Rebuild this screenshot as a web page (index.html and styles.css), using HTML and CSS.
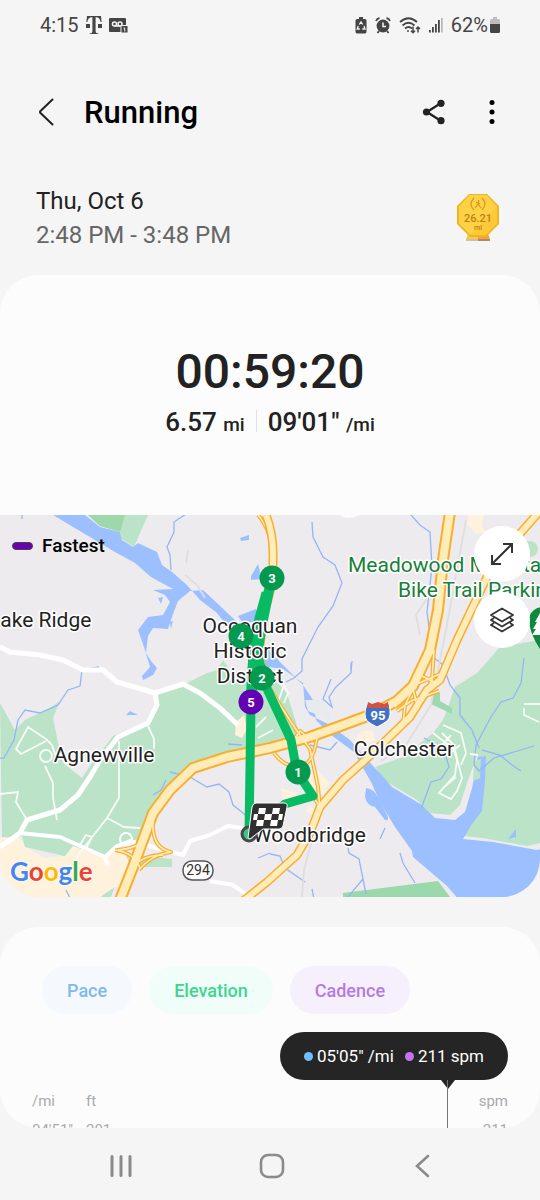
FILE: index.html
```html
<!DOCTYPE html>
<html lang="en">
<head>
    <meta charset="UTF-8">
    <meta name="viewport" content="width=device-width, initial-scale=1.0">
    <title>Running</title>
    <link rel="stylesheet" href="styles.css">
</head>
<body>
    <div class="status-bar">
        <div class="status-group">
            <span>4:15</span>
            <svg width="16" height="19" viewBox="0 0 16 19" fill="#454545">
                <path d="M1 0h14l.6 6h-1c-.5-3-1.600-4.600-5-4.700V15c0 1.700.6 2.200 2.600 2.300V18H3.800v-.7c2-.1 2.600-.6 2.600-2.300V1.300C3 1.400 1.900 3 1.400 6h-1zM0 8h4v4H0zM12 8h4v4h-4z"/>
            </svg>
            <svg width="19" height="15" viewBox="0 0 19 15">
                <rect width="17" height="14" rx="1" fill="#454545"/>
                <g fill="none" stroke="#f5f5f5" stroke-width="1.500"><circle cx="5.500" cy="6" r="2"/><circle cx="11" cy="6" r="2"/><path d="M5.500 8H11"/></g>
                <path d="M12 7.500h7V15h-7z" fill="#454545" stroke="#f5f5f5"/>
                <path d="M14.500 10h1.200v3.500" stroke="#f5f5f5" fill="none"/>
            </svg>
        </div>
        <div class="status-group status-right">
            <svg width="12" height="17" viewBox="0 0 12 17">
                <path d="M4 0h4v2h2q1.500 0 1.500 1.500v11q0 2-1.500 2H2q-1.500 0-1.500-2v-11Q.5 2 2 2h2z" fill="#454545"/>
                <path d="M4.300 7.500 6 5l1.700 2.500M9 9l1 3H7.300M4.800 12H2.200L3.300 9" fill="none" stroke="#f5f5f5" stroke-width="1.300"/>
            </svg>
            <svg width="16" height="17" viewBox="0 0 16 17" fill="none" stroke="#454545" stroke-width="1.800">
                <circle cx="8" cy="9" r="5.500" fill="#454545"/>
                <path d="M1 4q1-2.500 3.500-3M15 4q-1-2.500-3.500-3M4 14l-1.500 2M12 14l1.500 2"/>
                <path d="M8 5.500V9.500h3" stroke="#f5f5f5" stroke-width="1.500"/>
            </svg>
            <svg width="22" height="17" viewBox="0 0 22 17" fill="none" stroke="#454545" stroke-width="1.700">
                <path d="M1 5q8.500-7.500 17 0M3.500 8.500q6-5.500 12 0M6 11.500q3.500-3 7 0"/>
                <circle cx="9" cy="14" r=".7" fill="#454545" stroke-width=".6"/>
                <path d="M14 9.500V16M12 13.800l2 2 2-2M19 15.500V10M17 12l2-2 2 2" stroke-width="1.500"/>
            </svg>
            <svg width="14" height="16" viewBox="0 0 14 16" fill="#454545">
                <path d="M0 13h1.800v2.500H0zM3 10h1.800v5.500H3zM6 7h1.800v8.500H6zM9 3h1.800v12.500H9z"/>
                <path d="M12 1h1.800v14.500H12z" fill="#bbb"/>
            </svg>
            <span class="battery">62%
                <svg width="10" height="16" viewBox="0 0 10 16">
                    <path d="M3 0h4v2h1.500Q10 2 10 3.500V8H0V3.500Q0 2 1.500 2H3z" fill="#bdbdbd"/>
                    <path d="M0 7h10v7.500q0 1.500-1.500 1.500h-7Q0 16 0 14.500z" fill="#454545"/>
                </svg>
            </span>
        </div>
    </div>

    <header class="app-bar">
        <button class="icon-button" aria-label="Back">
            <svg width="16" height="28" viewBox="0 0 16 28" fill="none" stroke="#222" stroke-width="2" stroke-linecap="round" stroke-linejoin="round"><path d="M14.500 1.500 2.500 13q-1 1 0 2l12 11.500"/></svg>
        </button>
        <h1>Running</h1>
        <button class="icon-button" aria-label="Share">
            <svg width="24" height="26" viewBox="0 0 24 26" fill="#222"><path d="M19 4 5 13l14 9" fill="none" stroke="#222" stroke-width="2.300"/><circle cx="19" cy="4.300" r="3.600"/><circle cx="4.500" cy="13" r="3.600"/><circle cx="19" cy="21.700" r="3.600"/></svg>
        </button>
        <button class="icon-button more" aria-label="More options">
            <svg width="6" height="26" viewBox="0 0 6 26"><circle cx="3" cy="3.500" r="2.500"/><circle cx="3" cy="13" r="2.500"/><circle cx="3" cy="22.500" r="2.500"/></svg>
        </button>
    </header>

    <section class="workout-date">
        <div>
            <div>Thu, Oct 6</div>
            <div class="hours">2:48 PM - 3:48 PM</div>
        </div>
        <svg class="badge" width="42" height="48" viewBox="0 0 42 48">
            <path d="M11 40h20v5H9z" fill="#ffc83d"/>
            <path d="M21 40h10l2 5H21z" fill="#ff9c2a"/>
            <path d="M9 45h12v2H9z" fill="#c3c3b0"/>
            <path d="M21 45h12v2H21z" fill="#a18d78"/>
            <path d="M12 0h18l12 12v18L29 43H13L0 30V12z" fill="#f0b429"/>
            <path d="M12.500 1h17L40 12.500v17L28.500 41h-15L2 29.500v-17z" fill="#ffd245"/>
            <path d="M40 12.500v17L28.500 41h-15z" fill="#fdc938"/>
            <path d="M17 4q-6 6 0 12M25 4q6 6 0 12M22 6l-1 4-3 4M21 10l3 4M19 8l4 2" fill="none" stroke="#d79a25" stroke-width="1.200"/>
            <text x="21" y="28" class="badge-value">26.21</text>
            <text x="21" y="36" class="badge-unit">mi</text>
        </svg>
    </section>

    <main>
        <section class="card summary">
            <div class="duration">00:59:20</div>
            <div class="stats">
                <div>6.57 <small>mi</small></div>
                <div class="pace">09'01" <small>/mi</small></div>
            </div>
            <div class="map">
                <svg class="map-canvas" viewBox="0 0 540 382" role="img" aria-label="Route map">
                    <rect width="540" height="382" fill="#eeebef"/>
                    <!-- parks -->
                    <g fill="#bbe3c7">
                        <path d="M0 188l15 27 10-10 25-12 10-7-7 17 5 25 5 20 19 15 8-12 23-30 34-14 8-16V178l30-9 22-11 10-3 6-10 7 10 20 5 25 5 12 13 5 17 8 25-30 15-75 17-30 33-20 40-25 5-20 20-25-5-15-5-35-8-3-11-20 4z"/>
                        <path d="M88 0h60l-14 32-12-8-2-8-20-5z"/>
                        <path d="M447 195l8-23 22-14 23-26 40-7v203l-13 3-44-8-30-3-3-5 12-10 10-13 3-30 3-24-11 30-7 22-10 10-20-2-13-13-30-18-12-15 28-10 30-24 10-13z"/>
                        <path d="M431 185l3-9 6 2v8l12 7v6l-21-10z" fill="#9ed8af"/>
                        <path d="M122 341h22l28 3v8h-45zM97 382l18-11-4 11z"/>
                        <path d="M343 378l95-12 12 16H343z" fill="#9bd8ab"/>
                        <circle cx="530" cy="34" r="8"/>
                    </g>
                    <path d="M88 0h37l-5 17-20-6z" fill="#9dd7aa"/>
                    <!-- built-up areas -->
                    <g fill="#fff2dd">
                        <path d="M0 322l20 1 5 9 20 11 20-2 8-10 30 11 20-9 6 15-9 25-5-1-15 10H0z"/>
                        <path d="M236 207l8-7 3 14-5 9-7-3zM360 217l12-2 3 10-15 8-5-9zM310 260l8-4 12 12-8 12-13-12zM281 273l16 5-5 14-9-6zM308 290l12 8-5 5-8-7zM468 0h16l-2 10 3 7-8 2-10-10z"/>
                    </g>
                    <!-- water -->
                    <g fill="#9cc0ff">
                        <path d="M53 0h32l15 12 20 5 2 8 11 7 5-4 19 9 5 13 10 7 15 13 13 15 17 13 13 17 25 35 28 4 20 14 2 24 5 8 20 10 20 15 25 28 5 5 12 14 30 18 13 13 20 2 10-8 7-24 6-31 8-1-1 25-3 30-10 13-9 15 30 3 44 8 13-3v54h-90l-13-15-34-29-1-6-17-24-14-23-10-22-17-30-23-17-15-15-3-20-10-15-22-22-23-25-22-17-18-17-15-14-13 1-12 10-5 13-5 15-15-1-5 8-2 17 5 8 6 7-4 7-10 5-1-4 8-9-5-17-7-20 10-13 15-2 7-13-5-7-12-5 20-1-22-12-16-14-20-11z"/>
                        <path d="M366 273q8 1 12 9l9 18q3 6-2 5l-10-13q-8-1-10-10zM240 23l9-3v5l-8 1zM251 61l7-12 4 15-11 1zM238 101l18-7 4 10-16 6zM158 83l5-1-2 7zM170 107l3-1-2 8zM126 200l4-4 8 4zM508 324l8-10v8z"/>
                    </g>
                    <path d="M474 246l7-2-1 19-7 3z" fill="#bbe3c7"/>
                    <path d="M305 185h20l7 21-24-10z" fill="#e8ebee"/>
                    <g fill="none" stroke="#93b6f4" stroke-width="1.300">
                        <path d="M171 55l-1-15-3-8 7-15v-10l12-8M99 152l-17 3-2 16-12 4-10 15-18 8-15-3-7 10-4 20-10 18-14 1M312 7l1 15 10 20 12 8 7 18-9 23-15 21-16 32v12l-8 7-8 4M411 0l9 10 10 7 2 35-5 45 6 45 10 8 7 20 10 13v8M352 146l-1 12-15 14-7 10 3 10-9-8 8-20M351 158v-10M524 143l-3 25-8 15-12 4-10 15-15 28-2 20 5 6 15-13 20-6 20-6M482 235l18 5 12 10 9 6M153 280l8-5 5-10M170 257l20 5 17 10 12-3 10 8 4 13 15 12M228 229l14 1M460 187v13l12 15 7 18M424 223l20 12 5 17-8 12-10 3-10 27M385 313l-5 11M400 338l3 10 12 20M348 332l1 6 10 6 4 20-15 18M363 364l3 15M270 339l10 2 5 12 20 14M312 374l2 10M66 375l4 8M258 343l12-5M310 230l20 5 7-8M22 0v4"/>
                    </g>
                    <!-- small streets -->
                    <g fill="none" stroke="#f8fcf7" stroke-width="1.800">
                        <path d="M57 245l-5-15-6-6-18-12-12 22 5 5 25-13M45 251l8 17v15l4 22M0 279l18-2-2 10 11 18M119 226v57l-12 20-28 36-7 18M107 303l17 9 16 1M148 211l6 13v10M80 330l6-10 6 2-5 10M433 218l22 17 7 28-5 13-6 8-12-6 16-18 2-15-5-17-10-10M443 210l18 8 5 20-5 12M443 229l8-9M450 238l10-8M456 262l-13 11M470 239l8 1M524 193v7l15 7M524 189h16M277 190l7-20 4 8-4 10M258 223l15-8M256 212l10-10"/>
                        <circle cx="46" cy="241" r="6"/>
                    </g>
                    <g fill="none" stroke="#dedee0" stroke-width="1.800"><path d="M312 325l-8 30-2 27M466 5l-20 110-15 75-25 40-25 16M185 60l12 10 8 13M188 35l-2 13M420 120l-4-20 10-15"/></g>
                    <g fill="none" stroke="#fff" stroke-width="5" stroke-linejoin="round">
                        <path d="M0 132l10 5 30 3 23 5 20 10h20l14 12 38 11 28-9 17 9 20 15 18 17M155 178l2 12-9 18-30 14-18 23-10 17-12 18-18 15-33 10-7 13-20 14"/>
                        <path d="M20 318l40 4 45 20 12-11 13-5 53 14 7-14 20-6 18-9 20 3M105 343l3 8M210 366l23 4 17 12" stroke-width="4"/>
                        <circle cx="126" cy="324" r="6" stroke-width="2"/>
                    </g>
                    <!-- highways: casing first, then the fill -->
                    <g fill="none" stroke="#f9ae2d" stroke-linejoin="round">
                        <path d="M258 0q14 16 15 45v30l-8 30-3 30 3 30 15 25 15 23 15 21 8 38 2 22M115 335q20 3 25 18M143 325q-5 8-25 10M153 305q-2 28 18 32-20 3-32 18M133 352q10-12 30-12M274 238q10 14 25 14 14-2 18-29M290 230l10-14 10 8M395 192l15-20 30-13M397 196l14-10 28-10M413 174l5 20-16 12M434 135l-2 30-15 29M403 210l2-20 7-14M438 169l-16-8M312 280l8 12" stroke-width="4"/>
                        <path d="M120 385l13-33 10-27 10-27 17-23 23-22 34-11 43-9 40-11 33-12 27-10 27-14 16-15 17-36 8-40 5-50 7-48" stroke-width="12"/>
                        <path d="M243 386l24-19 30-27 13-22 10-26 23-27 30-27 37-36 17-27 13-10 17-40 30-63 30-40 22-25" stroke-width="9"/>
                    </g>
                    <g fill="none" stroke="#ffecb8" stroke-linejoin="round">
                        <path d="M258 0q14 16 15 45v30l-8 30-3 30 3 30 15 25 15 23 15 21 8 38 2 22M115 335q20 3 25 18M143 325q-5 8-25 10M153 305q-2 28 18 32-20 3-32 18M133 352q10-12 30-12M274 238q10 14 25 14 14-2 18-29M290 230l10-14 10 8M395 192l15-20 30-13M397 196l14-10 28-10M413 174l5 20-16 12M434 135l-2 30-15 29M403 210l2-20 7-14M438 169l-16-8M312 280l8 12" stroke-width="1.600"/>
                        <path d="M266 0q8 20 7 45v30" stroke="#f9ae2d" stroke-width="9"/>
                        <path d="M266 0q8 20 7 45v30" stroke-width="6"/>
                        <path d="M120 385l13-33 10-27 10-27 17-23 23-22 34-11 43-9 40-11 33-12 27-10 27-14 16-15 17-36 8-40 5-50 7-48" stroke-width="8"/>
                        <path d="M243 386l24-19 30-27 13-22 10-26 23-27 30-27 37-36 17-27 13-10 17-40 30-63 30-40 22-25" stroke-width="6"/>
                    </g>
                    <path d="M529 103a14 14 0 0 1 14-11v46q-14-18-14-35z" fill="#0d8a3e"/>
                    <path d="M540 98l-5 9h2l-4 7h3l-4 6h8z" fill="#fff"/>
                    <!-- run -->
                    <g fill="none" stroke="#08bb63" stroke-width="9" stroke-linejoin="round">
                        <path d="M249 318l2-131 2-50 5-26 14-48-9 44-5 30 4 26 29 62 6 32 16 24-28 8-33 27"/>
                        <path d="M251 187l4-65 12-44M252 140l12 18" stroke-width="11"/>
                    </g>
                    <!-- road shields -->
                    <path d="M367 189q10 3 22 0 3 13-2 17-4 3-10 6-6-3-10-6-4-6 0-17z" fill="#3f72c5" stroke="#fff"/>
                    <path d="M368 187l4 2 6-2 6 2 4-2 1 6h-22z" fill="#d25145"/>
                    <text x="378" y="205" class="shield">95</text>
                    <rect x="183" y="346" width="30" height="19" rx="9" fill="#fff" stroke="#555" stroke-width="1.500"/>
                    <text x="198" y="360" class="route-number">294</text>
                    <!-- place names -->
                    <g class="place">
                        <text x="-11" y="112">Lake Ridge</text>
                        <text x="104" y="247" text-anchor="middle">Agnewville</text>
                        <text x="404" y="241" text-anchor="middle">Colchester</text>
                        <text x="250" y="118" text-anchor="middle">Occoquan</text>
                        <text x="250" y="143" text-anchor="middle">Historic</text>
                        <text x="250" y="168" text-anchor="middle">District</text>
                        <text x="253" y="327">Woodbridge</text>
                        <text x="348" y="57" class="park">Meadowood Mountain</text>
                        <text x="398" y="82" class="park">Bike Trail Parking</text>
                    </g>
                    <!-- start and finish -->
                    <circle cx="249" cy="319" r="7" fill="#35c986" stroke="#484848" stroke-width="3"/>
                    <path d="M256 288h28q4 0 3 4l-4 19q-1 3-4 3h-16l-13 10-2-1 4-31q1-4 4-4z" fill="#303030" stroke="#fff"/>
                    <path d="M259 293h7l-1 6h7l1-6h7l-1 6h-7l-1 6h7l-1 6h-7l1-6h-7l-1 6h-7l1-6h7l1-6h-7zM279 299h4l-1 6h-4zM254 299h4l-1 6h-4z" fill="#fff"/>
                    <g class="marker">
                        <circle cx="272" cy="63" r="12.500"/><text x="272" y="68">3</text>
                        <circle cx="241" cy="121" r="12.500"/><text x="241" y="126">4</text>
                        <circle cx="262" cy="163" r="12.500"/><text x="262" y="168">2</text>
                        <circle cx="251" cy="187" r="12.500" class="fastest"/><text x="251" y="192">5</text>
                        <circle cx="298" cy="257" r="12.500"/><text x="298" y="262">1</text>
                    </g>
                    <text x="10" y="366" class="google"><tspan fill="#4285f4">G</tspan><tspan fill="#ea4335">o</tspan><tspan fill="#fbbc05">o</tspan><tspan fill="#4285f4">g</tspan><tspan fill="#34a853">l</tspan><tspan fill="#ea4335">e</tspan></text>
                    <ellipse cx="349" cy="-6" rx="14" ry="9" fill="#fcfcfc"/>
                </svg>
                <div class="legend"><i></i>Fastest</div>
                <div class="map-buttons">
                    <button aria-label="Full screen">
                        <svg width="24" height="24" viewBox="0 0 24 24" fill="none" stroke="#333" stroke-width="2"><path d="M2 22 22 2M13 2h9v9M2 13v9h9"/></svg>
                    </button>
                    <button aria-label="Map layers">
                        <svg width="26" height="26" viewBox="0 0 26 26" fill="none" stroke="#333" stroke-width="1.800" stroke-linejoin="round"><path d="M13 1.500 24 8l-11 6.500L2 8zM5 11l-3 2 11 6.500L24 13l-3-2M5 16l-3 2 11 6.500L24 18l-3-2"/></svg>
                    </button>
                </div>
            </div>
        </section>

        <section class="card chart">
            <div class="chips">
                <button class="chip-pace">Pace</button>
                <button class="chip-elevation">Elevation</button>
                <button class="chip-cadence">Cadence</button>
            </div>
            <div class="plot">
                <div class="tooltip">
                    <span class="dot dot-pace"></span>05'05" /mi
                    <span class="dot dot-cadence"></span>211 spm
                </div>
                <div class="axis">
                    <span>/mi</span><span>ft</span><span>spm</span>
                    <span>04'51"</span><span>201</span><span>211</span>
                </div>
            </div>
        </section>
    </main>

    <nav class="nav-bar">
        <button aria-label="Recent apps"><svg width="24" height="24" viewBox="0 0 24 24" stroke="#8a8a8a" stroke-width="3" stroke-linecap="round"><path d="M3 2.500v19M12 2.500v19M21 2.500v19"/></svg></button>
        <button aria-label="Home"><svg width="26" height="26" viewBox="0 0 26 26" fill="none" stroke="#8a8a8a" stroke-width="2.600"><rect x="2" y="2" width="22" height="22" rx="7"/></svg></button>
        <button aria-label="Back"><svg width="24" height="24" viewBox="0 0 24 24" fill="none" stroke="#8a8a8a" stroke-width="2.600" stroke-linecap="round"><path d="M17 2 6 12l11 10"/></svg></button>
    </nav>
</body>
</html>
```

FILE: styles.css
```css
* {
    box-sizing: border-box;
}
body {
    margin: 0;
    min-height: 100vh;
    display: flex;
    flex-direction: column;
    background-color: #f5f5f5;
    color: #222;
    font-family: Roboto, "Liberation Sans", sans-serif;
}
svg {
    display: block;
    flex-shrink: 0;
}
button {
    display: flex;
    align-items: center;
    justify-content: center;
    padding: 0;
    border: none;
    background: none;
    font-family: inherit;
    cursor: pointer;
}
.status-bar {
    height: 50px;
    padding: 0 40px;
    display: flex;
    justify-content: space-between;
    align-items: center;
    font-size: 20px;
    color: #454545;
}
.status-group {
    display: flex;
    align-items: center;
    gap: 7px;
}
.status-right {
    gap: 8px;
}
.battery {
    display: flex;
    align-items: center;
    gap: 2px;
}
.app-bar {
    display: flex;
    align-items: center;
    margin-top: 37px;
    padding: 0 24px 0 22px;
    height: 50px;
}
.app-bar h1 {
    flex: 1;
    margin: 0 0 0 14px;
    font-size: 31px;
    font-weight: 500;
    color: #000;
}
.icon-button {
    width: 48px;
    height: 48px;
}
.more {
    margin-left: 10px;
}
.workout-date {
    display: flex;
    justify-content: space-between;
    align-items: center;
    margin-top: 47px;
    padding: 0 41px 0 36px;
    font-size: 24px;
    line-height: 34px;
}
.hours {
    color: #666;
}
.badge {
    font-weight: 500;
    text-anchor: middle;
    fill: #c07f14;
}
.badge-value {
    font-size: 11px;
}
.badge-unit {
    font-size: 7px;
}
main {
    flex: 1;
    margin-top: 23px;
}
.card {
    background-color: #fcfcfc;
    border-radius: 38px;
    overflow: hidden;
}
.summary {
    padding-top: 67px;
    text-align: center;
}
.duration {
    font-size: 48px;
    line-height: 60px;
    font-weight: 500;
}
.stats {
    display: flex;
    justify-content: center;
    margin-top: 2px;
    margin-bottom: 72px;
    font-size: 26px;
    line-height: 36px;
    font-weight: 500;
}
.stats small {
    font-size: 19px;
}
.pace {
    position: relative;
    margin-left: 11px;
    padding-left: 12px;
}
.pace::before {
    content: "";
    position: absolute;
    left: 0;
    top: 6px;
    width: 1px;
    height: 22px;
    background-color: #e2e2e2;
}
.map {
    position: relative;
}
.map-canvas {
    width: 100%;
    height: auto;
}
.legend {
    position: absolute;
    left: 12px;
    top: 18px;
    display: flex;
    align-items: center;
    gap: 9px;
    font-size: 19px;
    line-height: 26px;
    font-weight: 500;
    color: #000;
}
.legend i {
    width: 21px;
    height: 8px;
    border: 1px solid #444;
    border-radius: 4px;
    background-color: #6a00b0;
}
.map-buttons {
    position: absolute;
    right: 10px;
    top: 11px;
    display: flex;
    flex-direction: column;
    gap: 10px;
}
.map-buttons button {
    width: 56px;
    height: 56px;
    border-radius: 50%;
    background-color: #fff;
}
.place {
    font-size: 21px;
    fill: #222;
    stroke: #fff;
    stroke-width: 3px;
    stroke-linejoin: round;
    paint-order: stroke;
}
.park {
    fill: #188038;
}
.shield {
    font-size: 13px;
    font-weight: 700;
    text-anchor: middle;
    fill: #fff;
}
.route-number {
    font-size: 14px;
    text-anchor: middle;
    fill: #333;
}
.marker {
    font-size: 13px;
    font-weight: 700;
    text-anchor: middle;
    fill: #fff;
}
.marker circle {
    fill: #039a50;
}
.marker .fastest {
    fill: #6400b4;
}
.google {
    font-family: Lato, sans-serif;
    font-size: 26px;
    font-weight: 700;
    stroke: #fff;
    stroke-width: 1px;
    paint-order: stroke;
}
.chart {
    height: 201px;
    margin-top: 30px;
    padding: 39px 32px 0;
}
.chips {
    display: flex;
    gap: 17px;
    padding-left: 10px;
}
.chips button {
    height: 48px;
    padding: 0 25px;
    border-radius: 24px;
    font-size: 18px;
    font-weight: 500;
}
.chips .chip-pace {
    background-color: #f5f8fd;
    color: #7dbbec;
}
.chips .chip-elevation {
    background-color: #f1fdf9;
    color: #3bd790;
}
.chips .chip-cadence {
    background-color: #f5f0fb;
    color: #b57be2;
}
.plot {
    position: relative;
    margin-top: 18px;
}
.tooltip {
    display: flex;
    align-items: center;
    width: fit-content;
    height: 48px;
    margin-left: auto;
    padding: 0 24px;
    border-radius: 24px;
    background-color: #252525;
    color: #fff;
    font-size: 17px;
}
/* pointer and the line down to the chart */
.tooltip::before {
    content: "";
    position: absolute;
    right: 53px;
    top: 48px;
    border: 7px solid transparent;
    border-top: 9px solid #252525;
    border-bottom: none;
}
.tooltip::after {
    content: "";
    position: absolute;
    right: 60px;
    top: 48px;
    width: 1px;
    height: 60px;
    background-color: #777;
}
.dot {
    width: 9px;
    height: 9px;
    margin-right: 4px;
    border-radius: 50%;
}
.dot-pace {
    background-color: #71bcff;
}
.dot-cadence {
    margin-left: 11px;
    background-color: #c474f0;
}
.axis {
    display: grid;
    grid-template-columns: 54px 1fr auto;
    margin-top: 7px;
    font-size: 15px;
    line-height: 29px;
    color: #aaa;
}
.axis span:nth-child(3n) {
    text-align: right;
}
.nav-bar {
    display: flex;
    justify-content: space-around;
    align-items: center;
    height: 72px;
    padding: 4px 42px 0 46px;
}
.nav-bar button {
    width: 60px;
    height: 48px;
}
```
